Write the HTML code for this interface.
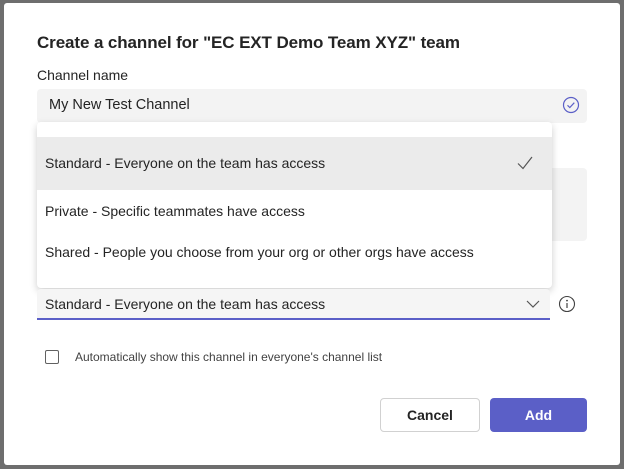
<!DOCTYPE html>
<html><head><style>
body{margin:0;width:624px;height:469px;background:#6e6e6e;font-family:"Liberation Sans",sans-serif;position:relative;overflow:hidden;color:#242424}
.dlg{position:absolute;left:4px;top:3px;width:616px;height:462px;background:#fff;border-radius:3px}
.a{position:absolute;white-space:nowrap}
</style></head><body>
<div class="dlg"></div>
<div class="a" style="left:37px;top:33px;font-size:17px;font-weight:600;letter-spacing:-0.1px;color:#242424">Create a channel for "EC EXT Demo Team XYZ" team</div>
<div class="a" style="left:37px;top:67px;font-size:14px">Channel name</div>
<div class="a" style="left:37px;top:89px;width:550px;height:34px;background:#f3f3f3;border-radius:4px"></div>
<div class="a" style="left:49px;top:97px;font-size:14.5px">My New Test Channel</div>
<svg class="a" style="left:562px;top:96px" width="18" height="18" viewBox="0 0 18 18"><circle cx="9" cy="9" r="7.5" fill="none" stroke="#5b5fc7" stroke-width="1.2"/><path d="M5.5 9.3l2.3 2.2 4.5-4.8" fill="none" stroke="#5b5fc7" stroke-width="1.2"/></svg>
<div class="a" style="left:552px;top:168px;width:35px;height:73px;background:#f3f3f3;border-radius:0 4px 4px 0"></div>
<div class="a" style="left:37px;top:122px;width:515px;height:166px;background:#fff;border-radius:4px;box-shadow:0 3px 8px rgba(0,0,0,.2)"></div>
<div class="a" style="left:37px;top:137px;width:515px;height:53px;background:#ebebeb"></div>
<div class="a" style="left:45px;top:155px;font-size:14px">Standard - Everyone on the team has access</div>
<svg class="a" style="left:516px;top:155px" width="18" height="16"><path d="M2 8.5l5 5L16 2" fill="none" stroke="#555" stroke-width="1.2"/></svg>
<div class="a" style="left:45px;top:203px;font-size:14px">Private - Specific teammates have access</div>
<div class="a" style="left:45px;top:244px;font-size:14px">Shared - People you choose from your org or other orgs have access</div>
<div class="a" style="left:37px;top:289px;width:513px;height:29px;background:#f5f5f5;border-bottom:2px solid #5b5fc7;border-radius:4px 4px 0 0"></div>
<div class="a" style="left:45px;top:296px;font-size:14px">Standard - Everyone on the team has access</div>
<svg class="a" style="left:525px;top:298px" width="16" height="12"><path d="M2 3l6 6 6-6" fill="none" stroke="#555" stroke-width="1.2"/></svg>
<svg class="a" style="left:558px;top:295px" width="18" height="18"><circle cx="9" cy="9" r="7.5" fill="none" stroke="#424242" stroke-width="1.1"/><circle cx="9" cy="5.6" r=".9" fill="#424242"/><path d="M9 8v5" stroke="#424242" stroke-width="1.2"/></svg>
<div class="a" style="left:45px;top:350px;width:12px;height:12px;border:1.2px solid #616161;border-radius:2px"></div>
<div class="a" style="left:75px;top:350px;font-size:12px;color:#424242">Automatically show this channel in everyone's channel list</div>
<div class="a" style="left:380px;top:398px;width:98px;height:32px;border:1px solid #d1d1d1;border-radius:4px;background:#fff;text-align:center;line-height:32px;font-size:14px;font-weight:bold">Cancel</div>
<div class="a" style="left:490px;top:398px;width:97px;height:34px;border-radius:4px;background:#5b5fc7;color:#fff;text-align:center;line-height:34px;font-size:14px;font-weight:bold">Add</div>
</body></html>
